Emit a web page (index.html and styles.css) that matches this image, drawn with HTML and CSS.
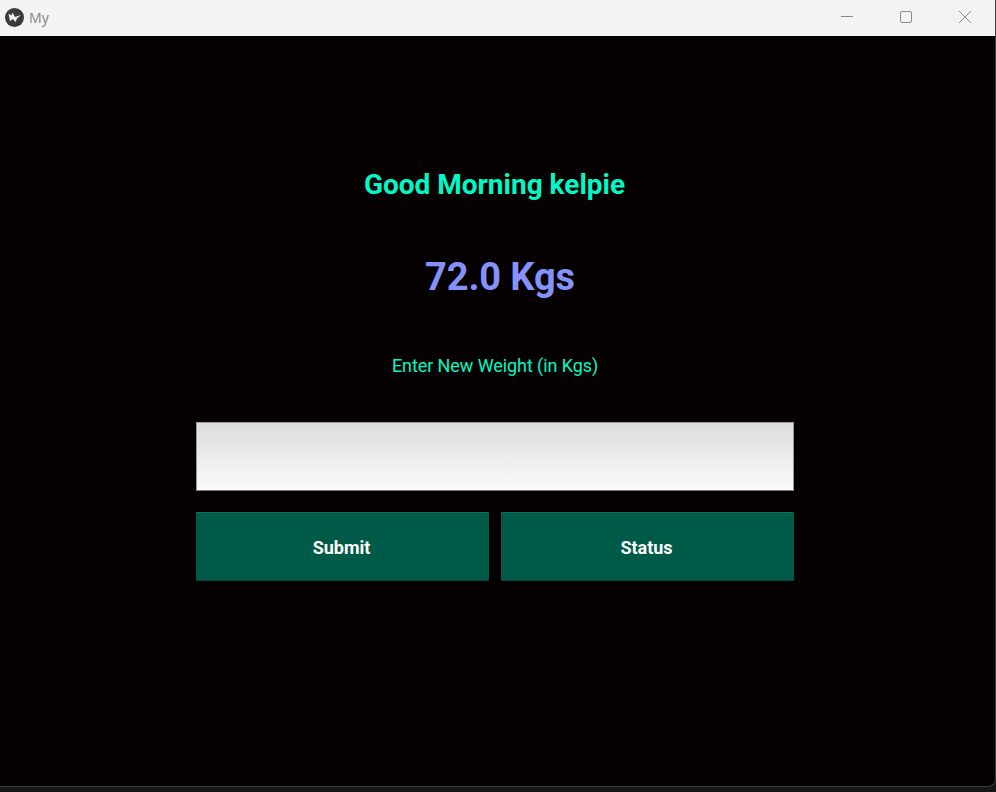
FILE: index.html
```html
<!DOCTYPE html>
<html lang="en">
<head>
    <meta charset="UTF-8">
    <title>My</title>
    <link rel="stylesheet" href="styles.css">
</head>
<body>
    <div class="window">
        <div class="titlebar">
            <svg class="app-icon" width="19" height="19" viewBox="0 0 19 19">
                <circle cx="9.5" cy="9.5" r="9.5" fill="#3a3a3a"/>
                <path d="M3.5 5.5 L6.5 7.5 L7.5 4.5 L10 9 L16 7 L12 10.5 L10.5 14 L8 11 L5 13 Z" fill="#f2f2f2"/>
            </svg>
            <div class="app-title">My</div>
            <div class="window-buttons">
                <svg class="win-btn" width="58" height="36" viewBox="0 0 58 36">
                    <path d="M23 16.5 H35" stroke="#8c8c8c" stroke-width="1" fill="none"/>
                </svg>
                <svg class="win-btn" width="58" height="36" viewBox="0 0 58 36">
                    <rect x="23.5" y="11.5" width="11" height="11" rx="1.5" stroke="#8c8c8c" stroke-width="1" fill="none"/>
                </svg>
                <svg class="win-btn" width="58" height="36" viewBox="0 0 58 36">
                    <path d="M23 11 L35 23 M35 11 L23 23" stroke="#8c8c8c" stroke-width="1" fill="none"/>
                </svg>
            </div>
        </div>
        <div class="content">
            <div class="greeting">Good Morning kelpie</div>
            <div class="weight">72.0 Kgs</div>
            <div class="prompt">Enter New Weight (in Kgs)</div>
            <input class="weight-input" type="text">
            <div class="button-row">
                <button class="action-button">Submit</button>
                <button class="action-button">Status</button>
            </div>
        </div>
    </div>
</body>
</html>
```

FILE: styles.css
```css
* {
    margin: 0;
    padding: 0;
    box-sizing: border-box;
}
html, body {
    height: 100%;
    overflow: hidden;
    background-color: #161616;
}
.window {
    height: 787px;
    display: flex;
    flex-direction: column;
    background-color: #050002;
    border-bottom: 1px solid #3c3c3c;
    border-right: 1px solid #3c3c3c;
    border-bottom-right-radius: 8px;
    overflow: hidden;
}
.titlebar {
    height: 36px;
    flex-shrink: 0;
    display: flex;
    align-items: center;
    padding-left: 5px;
    background-color: #f3f3f3;
}
.app-icon {
    margin-top: -2px;
}
.app-title {
    margin-left: 5px;
    margin-top: -2px;
    font-family: "Noto Sans", sans-serif;
    font-size: 14px;
    color: #8a8a8a;
}
.window-buttons {
    margin-left: auto;
    margin-right: 1px;
    display: flex;
}
.win-btn {
    display: block;
    margin-left: 1px;
}
.content {
    flex-grow: 1;
    display: flex;
    flex-direction: column;
    align-items: center;
    padding-top: 133px;
    font-family: Roboto, sans-serif;
    width: 598px;
    margin-left: 196px;
}
.greeting {
    height: 32px;
    line-height: 32px;
    margin-right: 1px;
    font-size: 28px;
    font-weight: 700;
    color: #00f9c6;
}
.weight {
    margin-top: 53px;
    height: 46px;
    line-height: 46px;
    margin-left: 10px;
    font-size: 38px;
    letter-spacing: -0.1px;
    font-weight: 700;
    color: #8592fb;
}
.prompt {
    margin-top: 54px;
    height: 24px;
    line-height: 24px;
    font-size: 18px;
    letter-spacing: -0.08px;
    color: #00f9c6;
}
.weight-input {
    margin-top: 44px;
    width: 100%;
    height: 69px;
    flex-shrink: 0;
    border: 1px solid #9a9a9a;
    border-bottom-color: #7d7875;
    background: linear-gradient(#dcdddc, #fbfbfb);
    outline: none;
}
.button-row {
    margin-top: 21px;
    width: 100%;
    display: flex;
    gap: 12px;
}
.action-button {
    flex: 1;
    height: 69px;
    padding: 2px 2px 0 0;
    border: none;
    border-top: 1px solid #00785f;
    border-bottom: 1px solid #024537;
    border-radius: 1px;
    background-color: #005a48;
    color: #ffffff;
    font-family: Roboto, sans-serif;
    font-size: 18px;
    font-weight: 700;
}
```
